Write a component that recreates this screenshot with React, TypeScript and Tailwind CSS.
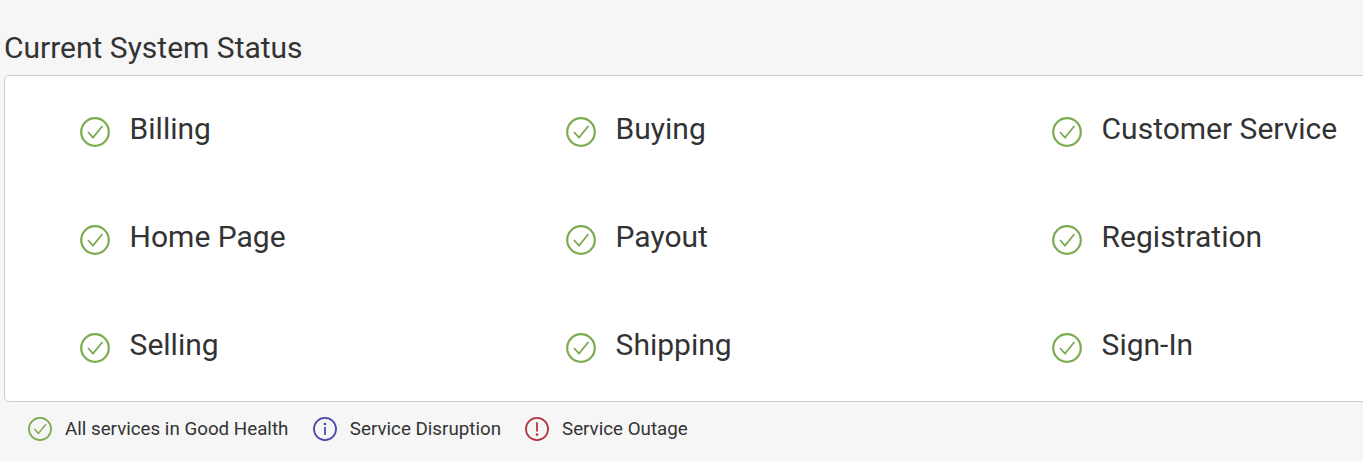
const services = [
  "Billing",
  "Buying",
  "Customer Service",
  "Home Page",
  "Payout",
  "Registration",
  "Selling",
  "Shipping",
  "Sign-In",
];

function StatusIcon({ color, size, kind }: { color: string; size: number; kind: "ok" | "info" | "alert" }) {
  return (
    <svg width={size} height={size} viewBox="0 0 30 30" fill="none" className="shrink-0">
      <circle cx="15" cy="15" r="13.8" stroke={color} strokeWidth="2.2" />
      {kind === "ok" && <path d="M8 15 L13 20.6 L22.4 9" stroke={color} strokeWidth="1.8" />}
      {kind === "info" && (
        <>
          <circle cx="15" cy="8.8" r="1.6" fill={color} />
          <path d="M15 12.5 V22.5" stroke={color} strokeWidth="2.2" />
        </>
      )}
      {kind === "alert" && (
        <>
          <path d="M15 6.5 V18" stroke={color} strokeWidth="2.2" />
          <circle cx="15" cy="22" r="1.6" fill={color} />
        </>
      )}
    </svg>
  );
}

export default function App() {
  return (
    <div className="h-[461px] w-[1363px] overflow-hidden bg-[#f6f6f6] font-['Roboto',sans-serif] text-[#333333]">
      <h2 className="pl-1 pt-[28px] text-[30px] leading-[40px]">Current System Status</h2>
      <div className="mt-[7px] ml-1 grid h-[327px] w-[1500px] grid-cols-[486px_486px_486px] grid-rows-[108px_108px_108px] rounded-[5px] border border-[#cccccc] bg-white">
        {services.map((name) => (
          <div key={name} className="flex items-start pl-[74.6px] pt-[41px]">
            <StatusIcon color="#7cab4f" size={30} kind="ok" />
            <span className="ml-[20px] -mt-[8px] text-[30px] leading-[40px]">{name}</span>
          </div>
        ))}
      </div>
      <div className="flex items-center pl-[28px] pt-[14px] text-[18.75px] leading-[26px]">
        <StatusIcon color="#7cab4f" size={24} kind="ok" />
        <span className="ml-[13px]">All services in Good Health</span>
        <span className="ml-[25px]">
          <StatusIcon color="#4a4aa8" size={24} kind="info" />
        </span>
        <span className="ml-[12.5px]">Service Disruption</span>
        <span className="ml-[24px]">
          <StatusIcon color="#b3343f" size={24} kind="alert" />
        </span>
        <span className="ml-[13px]">Service Outage</span>
      </div>
    </div>
  );
}
